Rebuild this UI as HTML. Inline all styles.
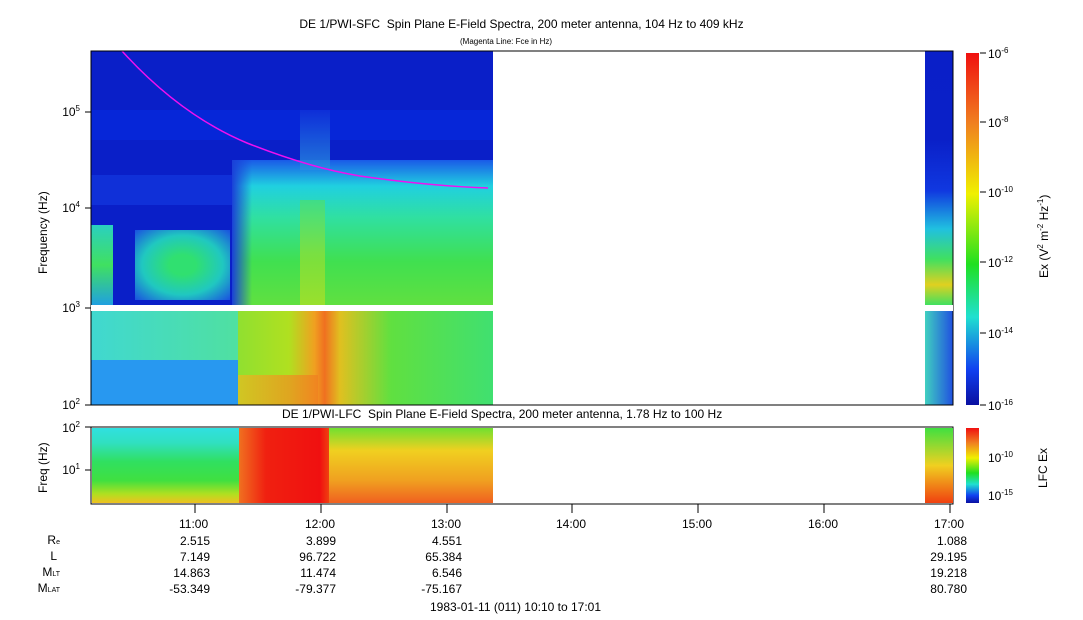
<!DOCTYPE html>
<html><head><style>
body{margin:0;width:1083px;height:620px;background:#fff;position:relative;overflow:hidden;font-family:"Liberation Sans",sans-serif;color:#000}
.a{position:absolute}
.t{position:absolute;font-size:12px;white-space:nowrap}
.r{text-align:right}
sup{font-size:8px}
</style></head><body>
<div class="t" style="left:0;width:1083px;top:17px;text-align:center;left:-20px">DE 1/PWI-SFC&nbsp; Spin Plane E-Field Spectra, 200 meter antenna, 104 Hz to 409 kHz</div>
<div class="t" style="left:460px;top:37px;font-size:8px">(Magenta Line: Fce in Hz)</div>

<div class="a" style="left:91px;top:51px;width:402px;height:254px;background:#0a1fc8"></div>
<div class="a" style="left:91px;top:110px;width:402px;height:30px;background:#0626d8"></div>
<div class="a" style="left:91px;top:175px;width:402px;height:30px;background:#1030d8"></div>
<div class="a" style="left:91px;top:225px;width:22px;height:80px;background:linear-gradient(#2ad0c0,#40e060,#20a0e0)"></div>
<div class="a" style="left:135px;top:230px;width:95px;height:70px;background:radial-gradient(ellipse,#30e070 20%,#20c8c0 60%,#1a50e0 100%)"></div>
<div class="a" style="left:232px;top:160px;width:261px;height:145px;background:linear-gradient(#1a5ae8 0%,#20d0e0 18%,#30e0a0 40%,#40e050 70%,#60e040 100%)"></div>
<div class="a" style="left:232px;top:160px;width:20px;height:145px;background:linear-gradient(90deg,#1a40d8,rgba(0,0,0,0))"></div>
<div class="a" style="left:300px;top:200px;width:25px;height:105px;background:linear-gradient(#50e060,#a0e030,#c0e020);opacity:.6"></div>
<div class="a" style="left:300px;top:110px;width:30px;height:60px;background:linear-gradient(#1030d8,#2890e0);opacity:.8"></div>
<div class="a" style="left:91px;top:311px;width:402px;height:94px;background:#20a0f0"></div>
<div class="a" style="left:91px;top:311px;width:150px;height:50px;background:linear-gradient(90deg,#40d8d0,#50e0a0)"></div>
<div class="a" style="left:91px;top:360px;width:150px;height:45px;background:#2898f0"></div>
<div class="a" style="left:238px;top:311px;width:255px;height:94px;background:linear-gradient(90deg,#90e030 0%,#b0e020 20%,#f0a020 30%,#f07020 34%,#e0c020 40%,#60e040 60%,#40e070 100%)"></div>
<div class="a" style="left:238px;top:375px;width:80px;height:30px;background:linear-gradient(90deg,#e0c020,#f08020);opacity:.8"></div>
<div class="a" style="left:925px;top:51px;width:28px;height:254px;background:linear-gradient(#0a1fc8 0%,#0a20c8 35%,#1038e0 55%,#20c0e0 70%,#40e060 82%,#e0d020 92%,#40e060 100%)"></div>
<div class="a" style="left:925px;top:311px;width:28px;height:94px;background:linear-gradient(90deg,#40d0c0,#2050e0)"></div>
<svg class="a" style="left:0;top:0" width="1083" height="620">
<path d="M122 51 Q180 115 247 143 Q310 168 360 176 Q430 186 488 188" stroke="#f010f0" stroke-width="1.5" fill="none"/>
<rect x="91" y="51" width="862" height="354" fill="none" stroke="#000"/>
<rect x="91" y="427" width="862" height="77" fill="none" stroke="#000"/>
<g stroke="#000">
<line x1="85" y1="112" x2="91" y2="112"/><line x1="85" y1="208" x2="91" y2="208"/><line x1="85" y1="308" x2="91" y2="308"/><line x1="85" y1="405" x2="91" y2="405"/>
<line x1="85" y1="427" x2="91" y2="427"/><line x1="85" y1="470" x2="91" y2="470"/>
<line x1="195" y1="504" x2="195" y2="513"/><line x1="321" y1="504" x2="321" y2="513"/><line x1="447" y1="504" x2="447" y2="513"/><line x1="572" y1="504" x2="572" y2="513"/><line x1="698" y1="504" x2="698" y2="513"/><line x1="824" y1="504" x2="824" y2="513"/><line x1="950" y1="504" x2="950" y2="513"/>
<line x1="980" y1="53" x2="986" y2="53"/><line x1="980" y1="122" x2="986" y2="122"/><line x1="980" y1="192" x2="986" y2="192"/><line x1="980" y1="262" x2="986" y2="262"/><line x1="980" y1="333" x2="986" y2="333"/><line x1="980" y1="405" x2="986" y2="405"/>
</g>
</svg>
<div class="a" style="left:91px;top:305px;width:862px;height:6px;background:#fff"></div>
<div class="a" style="left:92px;top:428px;width:147px;height:75px;background:linear-gradient(#30e0e0 0%,#30e0c0 20%,#30e060 45%,#40e040 70%,#b0e020 88%,#f0c020 100%)"></div>
<div class="a" style="left:239px;top:428px;width:90px;height:75px;background:linear-gradient(90deg,#f07020,#f02010 30%,#f01010 90%,#f04010)"></div>
<div class="a" style="left:329px;top:428px;width:164px;height:75px;background:linear-gradient(#70e030,#f0d020 30%,#f0a020 70%,#f06020)"></div>
<div class="a" style="left:925px;top:428px;width:28px;height:75px;background:linear-gradient(#40e040,#f0d020,#f04010)"></div>
<div class="a" style="left:966px;top:53px;width:13px;height:352px;background:linear-gradient(#f01010 0%,#f08020 20%,#f0f000 40%,#20e020 60%,#20e0d0 75%,#1040f0 90%,#0a10a0 100%)"></div>
<div class="a" style="left:966px;top:428px;width:13px;height:75px;background:linear-gradient(#f01010 0%,#f08020 20%,#f0f000 40%,#20e020 60%,#20e0d0 75%,#1040f0 90%,#0a10a0 100%)"></div>
<div class="t" style="left:988px;top:46px">10<sup>-6</sup></div>
<div class="t" style="left:988px;top:115px">10<sup>-8</sup></div>
<div class="t" style="left:988px;top:185px">10<sup>-10</sup></div>
<div class="t" style="left:988px;top:255px">10<sup>-12</sup></div>
<div class="t" style="left:988px;top:326px">10<sup>-14</sup></div>
<div class="t" style="left:988px;top:398px">10<sup>-16</sup></div>
<div class="t" style="left:988px;top:450px">10<sup>-10</sup></div>
<div class="t" style="left:988px;top:488px">10<sup>-15</sup></div>
<div class="t" style="left:1036px;top:278px;transform:rotate(-90deg);transform-origin:0 0">Ex (V<sup>2</sup> m<sup>-2</sup> Hz<sup>-1</sup>)</div>
<div class="t" style="left:1036px;top:488px;transform:rotate(-90deg);transform-origin:0 0">LFC Ex</div>
<div class="t r" style="left:40px;width:40px;top:104px">10<sup>5</sup></div>
<div class="t r" style="left:40px;width:40px;top:200px">10<sup>4</sup></div>
<div class="t r" style="left:40px;width:40px;top:300px">10<sup>3</sup></div>
<div class="t r" style="left:40px;width:40px;top:397px">10<sup>2</sup></div>
<div class="t r" style="left:40px;width:40px;top:420px">10<sup>2</sup></div>
<div class="t r" style="left:40px;width:40px;top:462px">10<sup>1</sup></div>
<div class="t" style="left:36px;top:274px;transform:rotate(-90deg);transform-origin:0 0">Frequency (Hz)</div>
<div class="t" style="left:36px;top:493px;transform:rotate(-90deg);transform-origin:0 0">Freq (Hz)</div>
<div class="t" style="left:282px;top:407px">DE 1/PWI-LFC&nbsp; Spin Plane E-Field Spectra, 200 meter antenna, 1.78 Hz to 100 Hz</div>
<div class="t" style="left:179px;top:517px">11:00</div>
<div class="t" style="left:305px;top:517px">12:00</div>
<div class="t" style="left:431px;top:517px">13:00</div>
<div class="t" style="left:556px;top:517px">14:00</div>
<div class="t" style="left:682px;top:517px">15:00</div>
<div class="t" style="left:808px;top:517px">16:00</div>
<div class="t" style="left:934px;top:517px">17:00</div>
<div class="t r" style="left:0;width:60px;top:533px">R<span style="font-size:7px">e</span></div>
<div class="t r" style="left:0;width:57px;top:549px">L</div>
<div class="t r" style="left:0;width:60px;top:565px">M<span style="font-size:7px">LT</span></div>
<div class="t r" style="left:0;width:60px;top:581px">M<span style="font-size:7px">LAT</span></div>
<div class="t r" style="left:110px;width:100px;top:533px;line-height:16px">2.515<br>7.149<br>14.863<br>-53.349</div>
<div class="t r" style="left:236px;width:100px;top:533px;line-height:16px">3.899<br>96.722<br>11.474<br>-79.377</div>
<div class="t r" style="left:362px;width:100px;top:533px;line-height:16px">4.551<br>65.384<br>6.546<br>-75.167</div>
<div class="t r" style="left:867px;width:100px;top:533px;line-height:16px">1.088<br>29.195<br>19.218<br>80.780</div>
<div class="t" style="left:430px;top:600px">1983-01-11 (011) 10:10 to 17:01</div>
</body></html>
